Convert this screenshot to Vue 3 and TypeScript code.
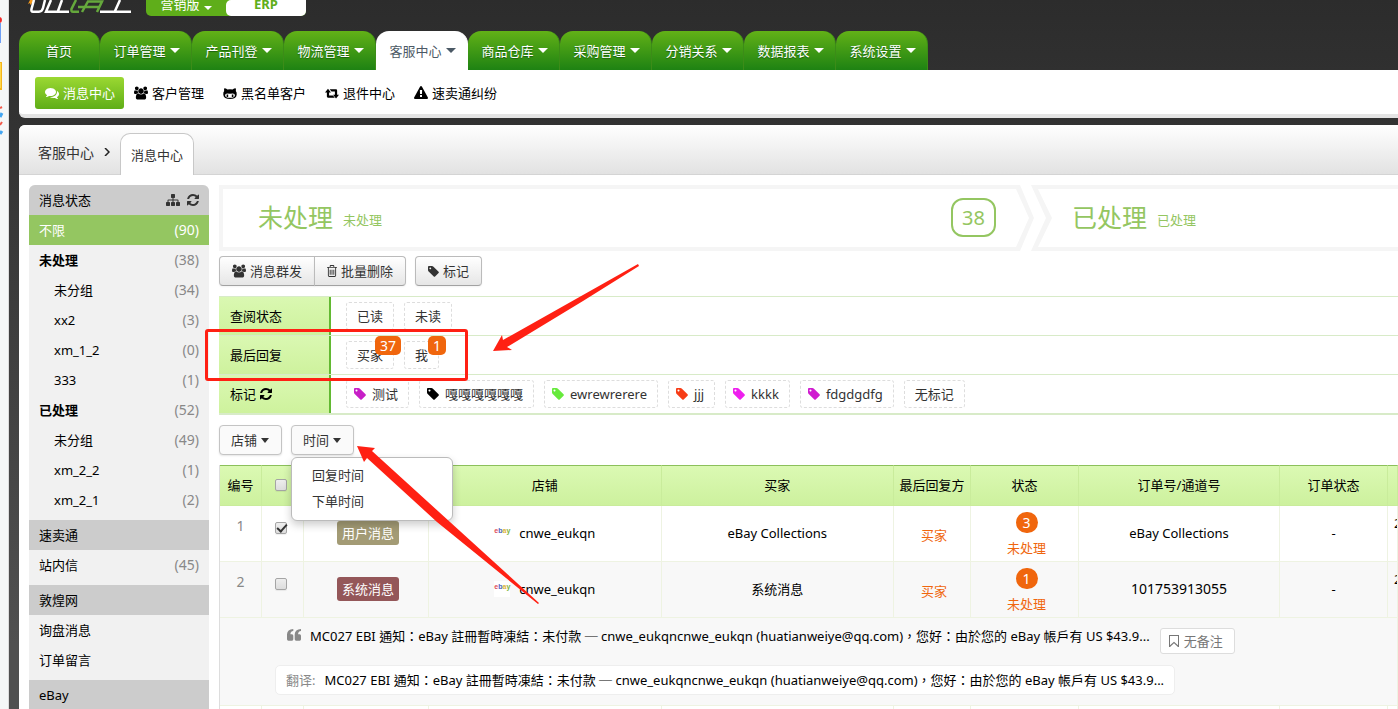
<script setup lang="ts">
import { ref } from 'vue'

interface NavItem { label: string; menu: boolean }
interface SideRow { label: string; count?: number; kind: 'item' | 'group' | 'child' | 'active' }
interface SideSection { title: string; tools?: boolean; rows: SideRow[] }
interface Chip { label: string; color?: string; badge?: number }
interface Message { id: number; checked: boolean; type: string; tone: string; shop: string; buyer: string; count: number; order: string; numeric: boolean }

const icons: Record<string, { box: string; d: string }> = {
  tag: { box: '128 128 1536 1536', d: 'M576 448q0-53-37.5-90.5t-90.5-37.5-90.5 37.5-37.5 90.5 37.5 90.5 90.5 37.5 90.5-37.5 37.5-90.5zm1067 576q0 53-37 90l-491 492q-39 37-91 37-53 0-90-37l-715-716q-38-37-64.5-101t-26.5-117v-416q0-52 38-90t90-38h416q53 0 117 26.5t102 64.5l715 714q37 39 37 91z' },
  refresh: { box: '128 128 1536 1536', d: 'M1639 1056q0 5-1 7-64 268-268 434.5t-478 166.5q-146 0-282.5-55t-243.5-157l-129 129q-19 19-45 19t-45-19-19-45v-448q0-26 19-45t45-19h448q26 0 45 19t19 45-19 45l-137 137q71 66 161 102t187 36q134 0 250-65t186-179q11-17 53-117 8-23 30-23h192q13 0 22.5 9.5t9.5 22.5zm25-800v448q0 26-19 45t-45 19h-448q-26 0-45-19t-19-45 19-45l138-138q-148-137-349-137-134 0-250 65t-186 179q-11 17-53 117-8 23-30 23h-199q-13 0-22.5-9.5t-9.5-22.5v-7q65-268 270-434.5t480-166.5q146 0 284 55.5t245 156.5l130-129q19-19 45-19t45 19 19 45z' },
  sitemap: { box: '0 0 1792 1792', d: 'M1792 1248v320q0 40-28 68t-68 28h-320q-40 0-68-28t-28-68v-320q0-40 28-68t68-28h96v-192h-512v192h96q40 0 68 28t28 68v320q0 40-28 68t-68 28h-320q-40 0-68-28t-28-68v-320q0-40 28-68t68-28h96v-192h-512v192h96q40 0 68 28t28 68v320q0 40-28 68t-68 28h-320q-40 0-68-28t-28-68v-320q0-40 28-68t68-28h96v-192q0-52 38-90t90-38h512v-192h-96q-40 0-68-28t-28-68v-320q0-40 28-68t68-28h320q40 0 68 28t28 68v320q0 40-28 68t-68 28h-96v192h512q52 0 90 38t38 90v192h96q40 0 68 28t28 68z' },
  users: { box: '-64 0 1920 1792', d: 'M529 896q-162 5-265 128h-134q-82 0-138-40.5t-56-118.5q0-353 124-353 6 0 43.5 21t97.5 42.5 119 21.5q67 0 133-23-5 37-5 66 0 139 81 256zm1071 637q0 120-73 189.5t-194 69.5h-874q-121 0-194-69.5t-73-189.5q0-53 3.5-103.5t14-109 26.5-108.5 43-97.5 62-81 85.5-53.5 111.5-20q10 0 43 21.5t73 48 107 48 135 21.5 135-21.5 107-48 73-48 43-21.5q61 0 111.5 20t85.5 53.5 62 81 43 97.5 26.5 108.5 14 109 3.5 103.5zm-1024-1277q0 106-75 181t-181 75-181-75-75-181 75-181 181-75 181 75 75 181zm704 384q0 159-112.5 271.5t-271.5 112.5-271.5-112.5-112.5-271.5 112.5-271.5 271.5-112.5 271.5 112.5 112.5 271.5zm576 225q0 78-56 118.5t-138 40.5h-134q-103-123-265-128 81-117 81-256 0-29-5-66 66 23 133 23 59 0 119-21.5t97.5-42.5 43.5-21q124 0 124 353zm-128-609q0 106-75 181t-181 75-181-75-75-181 75-181 181-75 181 75 75 181z' },
  comments: { box: '0 0 1792 1792', d: 'M1408 768q0 139-94 257t-256.5 186.5-353.5 68.5q-86 0-176-16-124 88-278 128-36 9-86 16h-3q-11 0-20.5-8t-11.5-21q-1-3-1-6.5t.5-6.5 2-6l2.5-5 3.5-5.5 4-5 4.5-5 4-4.5q5-6 23-25t26-29.5 22.5-29 25-38.5 20.5-44q-124-72-195-177t-71-224q0-139 94-257t256.5-186.5 353.5-68.5 353.5 68.5 256.5 186.5 94 257zm384 256q0 120-71 224.5t-195 176.5q10 24 20.5 44t25 38.5 22.5 29 26 29.5 23 25q1 1 4 4.5t4.5 5 4 5 3.5 5.5l2.5 5 2 6 .5 6.5-1 6.5q-3 14-13 22t-22 7q-50-7-86-16-154-40-278-128-90 16-176 16-271 0-472-132 58 4 88 4 161 0 309-45t264-129q125-92 192-212t67-254q0-77-23-152 129 71 204 178t75 230z' },
  warning: { box: '0 0 1792 1792', d: 'M1024 1375v-190q0-14-9.5-23.5t-22.5-9.5h-192q-13 0-22.5 9.5t-9.5 23.5v190q0 14 9.5 23.5t22.5 9.5h192q13 0 22.5-9.5t9.5-23.5zm-2-374l18-459q0-12-10-19-13-11-24-11h-220q-11 0-24 11-10 7-10 21l17 457q0 10 10 16.5t24 6.5h185q14 0 23.5-6.5t10.5-16.5zm-14-934l768 1408q35 63-2 126-17 29-46.5 46t-63.5 17h-1536q-34 0-63.5-17t-46.5-46q-37-63-2-126l768-1408q17-31 47-49t65-18 65 18 47 49z' },
  retweet: { box: '0 0 15 14', d: 'M0 6.500 3.200 2.500 6.400 6.500H4.400V9.600H8.500L10.500 12H3.200Q2 12 2 10.800V6.500ZM15 9 11.800 13 8.600 9H10.600V5.400H7L5 3H11.800Q13 3 13 4.200V9Z' },
  cat: { box: '0 0 14 14', d: 'M1.300 2.200Q3 2.300 4.400 3.400 7 3 9.600 3.400 11 2.300 12.700 2.200 13.200 3.600 12.800 5 14 6.300 13.700 8.700 13.200 13 7 13 .800 13 .300 8.700 0 6.300 1.200 5 .800 3.600 1.300 2.200ZM4.200 7.500Q2 7.500 2.100 9.400 2.200 11.800 7 11.800 11.800 11.800 11.900 9.400 12 7.500 9.800 7.500 7 7.800 4.200 7.500ZM3.600 8.500H5.200V10.900H3.600ZM8.800 8.500H10.400V10.900H8.800Z' },
  trash: { box: '0 0 11 13', d: 'M3 2V1Q3 0 4 0H7Q8 0 8 1V2H11V3H10V11.500Q10 13 8.500 13H2.500Q1 13 1 11.500V3H0V2ZM4 1V2H7V1ZM2 3V11.500Q2 12 2.500 12H8.500Q9 12 9 11.500V3ZM3 5H4V10.500H3ZM5 5H6V10.500H5ZM7 5H8V10.500H7Z' },
  quote: { box: '0 0 14 12', d: 'M6.300 0V2Q3.400 2.300 3.400 5.300H5Q6.300 5.400 6.300 6.800V10.200Q6.300 11.600 5 11.700H1.400Q0 11.600 0 10.200V5.300Q.200 .400 6.300 0ZM14 0V2Q11.100 2.300 11.100 5.300H12.700Q14 5.400 14 6.800V10.200Q14 11.600 12.700 11.700H9.100Q7.700 11.600 7.700 10.200V5.300Q7.900 .400 14 0Z' },
  bookmark: { box: '0 0 10 12', d: 'M0 0H10V12H9L5 8.200 1 12H0ZM1 1V10.300L5 6.700 9 10.300V1Z' }
}

const nav: NavItem[] = [
  { label: '首页', menu: false },
  { label: '订单管理', menu: true },
  { label: '产品刊登', menu: true },
  { label: '物流管理', menu: true },
  { label: '客服中心', menu: true },
  { label: '商品仓库', menu: true },
  { label: '采购管理', menu: true },
  { label: '分销关系', menu: true },
  { label: '数据报表', menu: true },
  { label: '系统设置', menu: true }
]
const activeNav = ref('客服中心')

const subnav = [
  { label: '消息中心', icon: 'comments' },
  { label: '客户管理', icon: 'users' },
  { label: '黑名单客户', icon: 'cat' },
  { label: '退件中心', icon: 'retweet' },
  { label: '速卖通纠纷', icon: 'warning' }
]

const sections: SideSection[] = [
  {
    title: '消息状态',
    tools: true,
    rows: [
      { label: '不限', count: 90, kind: 'active' },
      { label: '未处理', count: 38, kind: 'group' },
      { label: '未分组', count: 34, kind: 'child' },
      { label: 'xx2', count: 3, kind: 'child' },
      { label: 'xm_1_2', count: 0, kind: 'child' },
      { label: '333', count: 1, kind: 'child' },
      { label: '已处理', count: 52, kind: 'group' },
      { label: '未分组', count: 49, kind: 'child' },
      { label: 'xm_2_2', count: 1, kind: 'child' },
      { label: 'xm_2_1', count: 2, kind: 'child' }
    ]
  },
  { title: '速卖通', rows: [{ label: '站内信', count: 45, kind: 'item' }] },
  { title: '敦煌网', rows: [{ label: '询盘消息', kind: 'item' }, { label: '订单留言', kind: 'item' }] },
  { title: 'eBay', rows: [] }
]

const filters: { label: string; refresh?: boolean; chips: Chip[] }[] = [
  { label: '查阅状态', chips: [{ label: '已读' }, { label: '未读' }] },
  { label: '最后回复', chips: [{ label: '买家', badge: 37 }, { label: '我', badge: 1 }] },
  {
    label: '标记',
    refresh: true,
    chips: [
      { label: '测试', color: '#c71fc7' },
      { label: '嘎嘎嘎嘎嘎嘎', color: '#000000' },
      { label: 'ewrewrerere', color: '#67ea3c' },
      { label: 'jjj', color: '#f73c16' },
      { label: 'kkkk', color: '#ee1fee' },
      { label: 'fdgdgdfg', color: '#d01bd0' },
      { label: '无标记' }
    ]
  }
]

const messages = ref<Message[]>([
  { id: 1, checked: true, type: '用户消息', tone: 'olive', shop: 'cnwe_eukqn', buyer: 'eBay Collections', count: 3, order: 'eBay Collections', numeric: false },
  { id: 2, checked: false, type: '系统消息', tone: 'wine', shop: 'cnwe_eukqn', buyer: '系统消息', count: 1, order: '101753913055', numeric: true }
])
const timeOpen = ref(true)
const notice = 'MC027 EBI 通知：eBay 註冊暫時凍結：未付款 ─ cnwe_eukqncnwe_eukqn (huatianweiye@qq.com)，您好：由於您的 eBay 帳戶有 US $43.9...'
</script>

<template>
  <div class="page">
    <div class="dock" aria-hidden="true">
      <svg width="9" height="150" viewBox="0 0 9 150">
        <path d="M0 23H1V43H0Z" fill="#6f9ff5" />
        <circle cx="-1" cy="20" r="3" fill="#f22c2c" />
        <path d="M0 62H2V90H0Z" fill="#f5b51c" />
        <path d="M0 63H1V88H0Z" fill="#ffd84a" />
        <path d="M0 108 2 107M0 125 2 122" stroke="#f35a4a" stroke-width="2" />
        <path d="M0 117 2 113M0 134 2 131" stroke="#43a6f2" stroke-width="3" />
      </svg>
    </div>
    <div class="shell">
      <header class="brand">
        <svg class="logo" width="106" height="16" viewBox="0 0 106 16" fill="none" stroke-width="2.500">
          <path d="M1 4 3 0H8L3 5 3 3Z" fill="#f59a1d" />
          <path d="M7 0 4.500 9Q4 11.700 6 11.700H12Q15 11.700 16 8L18 0" stroke="#fff" />
          <path d="M24 0 19 11.700H42M31 11 35 0" stroke="#fff" />
          <path d="M49 0 44.500 9Q44 11.700 46 11.700H52" stroke="#65a83c" />
          <path d="M51 7H72M55 12 61 1.500H75L70 12" stroke="#65a83c" />
          <path d="M73 11.700H104M88 11 93 0" stroke="#fff" />
        </svg>
        <div class="versions">
          <button type="button" class="version">营销版<span class="caret"></span></button>
          <button type="button" class="version erp">ERP</button>
        </div>
      </header>

      <nav class="nav">
        <a v-for="item in nav" :key="item.label" href="#" :class="{ active: item.label === activeNav, plain: !item.menu }" @click.prevent="activeNav = item.label">
          {{ item.label }}<span v-if="item.menu" class="caret"></span>
        </a>
      </nav>
      <nav class="subnav">
        <a v-for="(item, i) in subnav" :key="item.label" href="#" :class="{ active: i === 0 }">
          <svg :viewBox="icons[item.icon].box" class="icon"><path :d="icons[item.icon].d" fill-rule="evenodd" /></svg>{{ item.label }}
        </a>
      </nav>

      <main class="panel">
        <div class="crumbs">
          <a href="#">客服中心</a>
          <svg class="chevron" viewBox="0 0 6 8"><path d="M1 0 5 4 1 8" /></svg>
          <a href="#" class="tab">消息中心</a>
        </div>
        <div class="body">
          <aside class="side">
            <section v-for="s in sections" :key="s.title">
              <h2>
                <span>{{ s.title }}</span>
                <span v-if="s.tools" class="tools">
                  <button type="button" aria-label="分组"><svg :viewBox="icons.sitemap.box"><path :d="icons.sitemap.d" /></svg></button>
                  <button type="button" aria-label="刷新"><svg class="round" :viewBox="icons.refresh.box"><path :d="icons.refresh.d" /></svg></button>
                </span>
              </h2>
              <a v-for="(r, i) in s.rows" :key="i" href="#" :class="r.kind">
                <span>{{ r.label }}</span><span v-if="r.count !== undefined" class="count">({{ r.count }})</span>
              </a>
            </section>
          </aside>

          <div class="content">
            <div class="steps">
              <div class="step first"><strong>未处理</strong><span>未处理</span><b>38</b></div>
              <svg class="arrows" width="37" height="66" viewBox="0 0 37 66">
                <path d="M0 0H4L18 33 4 66H0V62L13 33 0 4ZM15 0H37V4H22L36 33 22 62H37V66H15L30 33Z" />
              </svg>
              <div class="step second"><strong>已处理</strong><span>已处理</span></div>
            </div>

            <div class="actions">
              <div class="group">
                <button type="button"><svg class="icon" :viewBox="icons.users.box"><path :d="icons.users.d" /></svg>消息群发</button>
                <button type="button"><svg class="icon trash" :viewBox="icons.trash.box"><path :d="icons.trash.d" fill-rule="evenodd" /></svg>批量删除</button>
              </div>
              <div class="group">
                <button type="button"><svg class="icon tag" :viewBox="icons.tag.box"><path :d="icons.tag.d" /></svg>标记</button>
              </div>
            </div>

            <div class="filters">
              <div v-for="f in filters" :key="f.label" class="filter">
                <div class="name">{{ f.label }}<svg v-if="f.refresh" :viewBox="icons.refresh.box"><path :d="icons.refresh.d" /></svg></div>
                <div class="chips">
                  <button v-for="c in f.chips" :key="c.label" type="button" :class="{ tagged: c.color }">
                    <svg v-if="c.color" :viewBox="icons.tag.box" :fill="c.color"><path :d="icons.tag.d" /></svg>{{ c.label }}<i v-if="c.badge">{{ c.badge }}</i>
                  </button>
                </div>
              </div>
              <div class="mark-box"></div>
            </div>

            <div class="drops">
              <button type="button">店铺<span class="caret"></span></button>
              <div class="drop">
                <button type="button" :aria-expanded="timeOpen" @click="timeOpen = !timeOpen">时间<span class="caret"></span></button>
                <div v-if="timeOpen" class="menu">
                  <a href="#">回复时间</a>
                  <a href="#">下单时间</a>
                </div>
              </div>
            </div>

            <table class="grid">
              <colgroup>
                <col class="w-no" /><col class="w-check" /><col class="w-type" /><col /><col /><col class="w-last" />
                <col class="w-state" /><col class="w-order" /><col class="w-state" /><col class="w-time" />
              </colgroup>
              <thead>
                <tr>
                  <th>编号</th><th><input type="checkbox" aria-label="全选" /></th><th></th><th>店铺</th><th>买家</th>
                  <th>最后回复方</th><th>状态</th><th>订单号/通道号</th><th>订单状态</th><th></th>
                </tr>
              </thead>
              <tbody>
                <tr v-for="m in messages" :key="m.id" :class="{ alt: m.id === 2 }">
                  <td class="no">{{ m.id }}</td>
                  <td class="check"><input v-model="m.checked" type="checkbox" :aria-label="'选择 ' + m.id" /></td>
                  <td><span class="type" :class="m.tone">{{ m.type }}</span></td>
                  <td><span class="shop"><span class="ebay"><i>e</i><i>b</i><i>a</i><i>y</i></span>{{ m.shop }}</span></td>
                  <td>{{ m.buyer }}</td>
                  <td class="orange last">买家</td>
                  <td class="orange state"><b>{{ m.count }}</b><span>未处理</span></td>
                  <td :class="{ digits: m.numeric }">{{ m.order }}</td>
                  <td>-</td>
                  <td class="time">2</td>
                </tr>
                <tr class="alt detail">
                  <td colspan="10">
                    <div class="quote">
                      <svg :viewBox="icons.quote.box"><path :d="icons.quote.d" /></svg>
                      <span class="notice" lang="zh-TW">{{ notice }}</span>
                      <button type="button"><svg :viewBox="icons.bookmark.box"><path :d="icons.bookmark.d" fill-rule="evenodd" /></svg>无备注</button>
                    </div>
                    <div class="translated"><span>翻译:</span><span class="notice" lang="zh-TW">{{ notice }}</span></div>
                  </td>
                </tr>
                <tr class="next"><td v-for="n in 10" :key="n"></td></tr>
              </tbody>
            </table>
          </div>
        </div>
      </main>
    </div>

    <svg class="pointers" width="660" height="620" viewBox="0 0 660 620" aria-hidden="true">
      <path d="M638 264 503 340 502 335 493 351 512 350 507 347 583 301 639 266Z" />
      <path d="M357 446 375 448 372 451 450 522 539 603 538 604 437 522 367 458 364 462Z" />
    </svg>
  </div>
</template>

<style>
html, body { margin: 0; height: 100%; overflow: hidden; }
</style>

<style scoped>
* { box-sizing: border-box; }
.page {
  position: relative;
  display: flex;
  min-height: 100vh;
  background: linear-gradient(#2c2c2c, #303030 10%, #505050 90%);
  font: 13px/20px "Noto Sans", "Noto Sans CJK SC", sans-serif;
  color: #000;
}
a { color: inherit; text-decoration: none; }
button { font: inherit; color: inherit; border: 0; background: none; padding: 0; margin: 0; }
svg { flex: none; }
.dock { flex: none; width: 9px; background: #f5f7f7; border-right: 1px solid #dcdcdc; }
.dock svg { display: block; }
.shell { flex: 1; min-width: 0; padding-left: 10px; display: flex; flex-direction: column; }
.caret { flex: none; width: 0; height: 0; border: 4px solid transparent; border-top-color: currentColor; border-bottom: 0; margin-left: 4px; }

.brand { display: flex; height: 31px; padding-left: 8px; gap: 13px; overflow: hidden; }
.versions { display: flex; height: 16px; border-radius: 0 0 5px 5px; overflow: hidden; background: #5fae1a; }
.version { width: 80px; height: 16px; color: #fff; display: flex; align-items: center; justify-content: center; line-height: 20px; padding-bottom: 9px; }
.version .caret { margin-top: 8px; }
.erp { background: #fff; color: #5fae1a; font-weight: 700; border-radius: 5px 0 0 5px; }

.nav { display: flex; }
.nav a { width: 92px; height: 39px; display: flex; align-items: center; justify-content: center; padding-left: 2px; color: #fff; border-radius: 13px 13px 0 0; background: linear-gradient(#62b117, #1e8213); border-right: 1px solid #3c8c18; text-shadow: 0 1px 1px #1a5f0c; }
.nav a.plain { width: 81px; padding-left: 0; }
.nav a .caret { border-width: 5px 5px 0; }
.nav a.active { background: #fff; color: #4b5965; border-color: #fff; text-shadow: none; }
.subnav { display: flex; align-items: center; height: 48px; padding: 2px 16px 0; border-bottom: 4px solid #e4e4e4; background: #fff; border-radius: 0 0 0 6px; }
.subnav a { display: flex; align-items: center; gap: 4px; height: 32px; padding: 0 9px 0 10px; border-radius: 3px; }
.subnav a.active { color: #fff; background: linear-gradient(#9bd832, #5fae17); }
.icon { width: 14px; height: 14px; fill: currentColor; }

.panel { flex: 1; margin-top: 7px; background: #fff; border-radius: 6px 0 0 0; overflow: hidden; }
.crumbs { height: 50px; display: flex; align-items: flex-end; padding-left: 19px; border-bottom: 1px solid #d4d4d4; background: linear-gradient(#fff, #e2e2e2); color: #333; font-size: 14px; }
.crumbs a { height: 31px; }
.chevron { width: 6px; height: 8px; margin: 0 10px 18px; fill: none; stroke: #222; stroke-width: 1.5; }
.crumbs .tab { width: 74px; height: 42px; margin-bottom: -1px; line-height: 43px; text-align: center; font-size: 13px; background: #fff; border: 1px solid #c8c8c8; border-bottom: 0; border-radius: 10px 10px 0 0; }
.body { display: flex; gap: 10px; padding: 10px 0 0 10px; }

.side { flex: none; width: 180px; background: #f1f1f1; border-radius: 6px 6px 0 0; overflow: hidden; }
.side section + section { margin-top: 5px; }
.side h2, .side a { display: flex; align-items: center; justify-content: space-between; height: 30px; margin: 0; padding: 0 10px 1px; font-size: 13px; font-weight: 400; }
.side h2 { background: #ccc; }
.side .child { padding-left: 25px; }
.side .group { font-weight: 700; }
.side .active { background: #94c661; color: #fff; }
.side .count { font-weight: 400; font-size: 14px; color: #888; }
.side .active .count { color: #fff; }
.tools { display: flex; gap: 7px; }
.tools button { display: flex; }
.tools svg { width: 14px; height: 14px; fill: #333; }
.tools .round { width: 12px; }

.content { flex: 1; min-width: 0; }
.steps { display: flex; color: #94c661; }
.step { height: 66px; display: flex; align-items: center; border: 4px solid #f5f5f5; padding-bottom: 2px; }
.step strong { font-weight: 400; font-size: 25px; line-height: 36px; }
.step span { margin-left: 10px; padding-top: 6px; }
.step b { margin-left: auto; width: 45px; height: 39px; line-height: 35px; font-size: 20px; font-weight: 400; text-align: center; border: 2px solid; border-radius: 12px; }
.step.first { flex: 738; border-right: 0; padding-left: 35px; padding-right: 20px; }
.step.second { flex: 326; border-left: 0; border-right: 0; padding-left: 19px; }
.arrows { fill: #f5f5f5; }

.actions { display: flex; gap: 9px; margin-top: 5px; }
.group { display: flex; }
.actions button { display: flex; align-items: center; gap: 4px; height: 30px; padding: 0 12px; color: #333; border: 1px solid #bbb; border-bottom-color: #a2a2a2; background: linear-gradient(#fff, #e6e6e6); box-shadow: 0 1px 2px #0000000d; }
.actions button:first-child { border-radius: 4px 0 0 4px; }
.actions button:last-child { border-radius: 0 4px 4px 0; }
.actions button:only-child { border-radius: 4px; }
.actions button + button { margin-left: -1px; }
.actions .trash { width: 10px; height: 12px; }
.actions .tag { width: 11px; height: 11px; }

.filters { position: relative; margin-top: 10px; border-bottom: 2px solid #d8ebc8; }
.filter { display: flex; height: 39px; border-top: 1px solid #d8ebc8; }
.name { width: 112px; padding-left: 11px; display: flex; align-items: center; gap: 4px; background: linear-gradient(#daf8b2, #cef29d); border-right: 2px solid #62b932; }
.name svg { width: 12px; height: 12px; }
.chips { display: flex; align-items: center; gap: 10px; padding-left: 15px; color: #333; }
.chips button { position: relative; display: flex; align-items: center; height: 28px; padding: 0 10px; border: 1px dashed #ddd; border-radius: 3px; }
.chips .tagged { padding-left: 7px; gap: 6px; }
.chips svg { width: 12px; height: 12px; }
.chips i { position: absolute; right: -8px; top: -6px; height: 19px; line-height: 19px; padding: 0 5px; font-size: 14px; font-style: normal; color: #fff; background: #f0660d; border-radius: 5px; }
.mark-box { position: absolute; left: -14px; top: 33px; width: 263px; height: 52px; border: 3px solid #ff2013; border-radius: 3px; }

.drops { display: flex; gap: 9px; margin: 10px 0; }
.drops button { display: flex; align-items: center; height: 30px; padding: 0 12px 0 11px; color: #333; border: 1px solid #c4c4c4; border-radius: 4px; background: #fafafa; box-shadow: 0 1px 2px #0000001a; }
.drops .caret { border-width: 5px 4px 0; }
.drop { position: relative; }
.menu { position: absolute; z-index: 2; top: 32px; left: 0; width: 162px; padding: 4px 0 6px; background: #fff; border: 1px solid #bbb; border-radius: 6px; box-shadow: 0 4px 8px #0003; }
.menu a { display: block; height: 26px; line-height: 26px; padding-left: 20px; color: #333; }

.grid { width: 100%; table-layout: fixed; border-collapse: separate; border-spacing: 0; border-left: 1px solid #ddd; }
.w-no, .w-check { width: 42px; }
.w-type { width: 125px; }
.w-last { width: 77px; }
.w-state { width: 108px; }
.w-order { width: 201px; }
.w-time { width: 10px; }
.grid th, .grid td { padding: 0 0 2px; text-align: center; vertical-align: middle; font-weight: 400; border-right: 1px solid #eef3e2; border-bottom: 1px solid #eef3e2; overflow: hidden; white-space: nowrap; }
.grid th { height: 41px; border-color: #c9ec9b; border-top: 1px solid #8cc05b; background: linear-gradient(#dbf9b3, #cdf19e); }
.grid td { height: 56px; }
.alt td { background: #f8f8f8; }
.grid .no { vertical-align: top; padding-top: 10px; color: #888; font-size: 14px; }
.grid .check { vertical-align: top; padding-top: 16px; }
.grid input { appearance: none; display: block; width: 12px; height: 12px; margin: 0 0 0 13px; border: 1px solid #a5a5a5; border-radius: 2px; background: linear-gradient(#eee, #ddd); box-shadow: 0 1px 1px #0001; }
.grid input:checked::after { content: ""; display: block; width: 4px; height: 8px; margin: -1px 0 0 3px; border: solid #333; border-width: 0 2px 2px 0; transform: rotate(42deg); }
.type { display: inline-block; height: 24px; line-height: 24px; padding: 0 5px; color: #fff; border-radius: 3px; margin-left: 4px; }
.olive { background: #a39b75; }
.wine { background: #945759; }
.shop { display: flex; justify-content: center; align-items: center; gap: 9px; }
.ebay { width: 16px; height: 16px; background: #fff; font: 700 7px/12px "Liberation Sans", sans-serif; }
.ebay i { font-style: normal; color: #e04a55; }
.ebay i:nth-child(2) { color: #4a63c0; }
.ebay i:nth-child(3) { color: #e0b23a; }
.ebay i:nth-child(4) { color: #7db33c; }
.digits { font-size: 14px; }
.orange { color: #f0660d; }
.grid .last { padding: 3px 0 0 4px; }
.grid .state { padding: 0 0 0 4px; }
.state b { display: block; width: 22px; height: 21px; line-height: 21px; margin: 2px auto 5px; font-size: 14px; font-weight: 400; color: #fff; background: #f0660d; border-radius: 11px; }
.state span { display: block; }
.grid .time { text-align: left; vertical-align: top; padding: 7px 0 0 6px; }
.grid .detail td { height: 88px; padding: 7px 0 10px 55px; text-align: left; }
.quote { display: flex; align-items: flex-start; height: 31px; padding-left: 12px; }
.quote > svg { width: 14px; height: 12px; margin: 3px 9px 0 0; fill: #888; }
.quote button { display: flex; align-items: center; gap: 5px; height: 26px; margin: 2px 0 0 10px; padding: 0 11px 0 8px; color: #777; background: #fff; border: 1px solid #ddd; border-radius: 3px; }
.quote button svg { width: 10px; height: 12px; fill: #777; }
.notice { font-family: "Noto Sans", "Noto Sans CJK TC", sans-serif; }
.translated { display: inline-flex; gap: 9px; height: 30px; line-height: 28px; margin-top: 8px; padding: 0 10px; background: #fff; border: 1px solid #eee; border-radius: 5px; }
.translated span:first-child { color: #888; }
.grid .next td { height: 10px; }
.pointers { position: absolute; left: 0; top: 0; z-index: 3; fill: #ff2013; pointer-events: none; }
</style>
